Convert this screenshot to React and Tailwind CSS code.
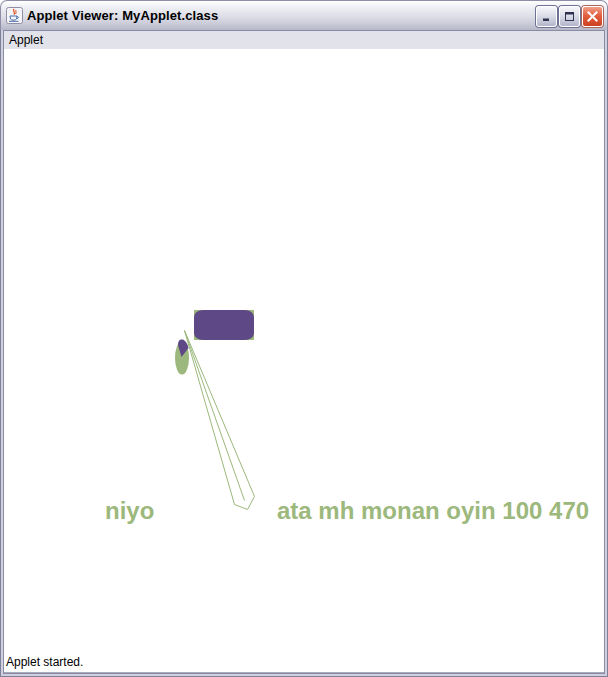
import React from "react";

function JavaIcon() {
  return (
    <svg width="17" height="17" viewBox="0 0 17 17">
      <rect x="0.5" y="0.5" width="16" height="16" rx="2" fill="#f4f4f8" stroke="#8e8ea6" />
      <path d="M8 2 C6 4 10 5 8 7.5" stroke="#e0501c" strokeWidth="1.3" fill="none" />
      <path d="M10 3 C9 4.5 11 5 9.6 7" stroke="#e0501c" strokeWidth="1" fill="none" />
      <path d="M4 9 L4.5 12 C5 13.5 10 13.5 10.5 12 L11 9 Z" fill="none" stroke="#4a6fa8" strokeWidth="1" />
      <path d="M11 9.5 C13 9.5 13 11.5 10.7 11.5" fill="none" stroke="#4a6fa8" strokeWidth="1" />
      <path d="M3 14.3 L12.5 14.3" stroke="#4a6fa8" strokeWidth="1" />
    </svg>
  );
}

function TitleButton({ kind }) {
  if (kind === "close") {
    return (
      <div className="w-[21px] h-[21px] rounded-[3px] border border-white bg-[linear-gradient(to_bottom,#f0a08a,#e2603f_45%,#cc4122)] shadow-[0_0_0_1px_#a8685e] flex items-center justify-center">
        <svg width="11" height="11" viewBox="0 0 11 11">
          <path d="M1.5 1.5 L9.5 9.5 M9.5 1.5 L1.5 9.5" stroke="white" strokeWidth="2" strokeLinecap="square" />
        </svg>
      </div>
    );
  }
  return (
    <div className="w-[21px] h-[21px] rounded-[3px] border border-white bg-[linear-gradient(to_bottom,#f6f6fa,#d9dae6_50%,#b4b5cb)] shadow-[0_0_0_1px_#6f7192] flex items-center justify-center">
      {kind === "min" ? (
        <svg width="11" height="11" viewBox="0 0 11 11">
          <rect x="2" y="7.5" width="6" height="2.5" fill="#2f3150" />
        </svg>
      ) : (
        <svg width="11" height="11" viewBox="0 0 11 11">
          <rect x="1.5" y="1.5" width="8" height="8" fill="none" stroke="#2f3150" strokeWidth="1" />
          <rect x="1.5" y="1.5" width="8" height="2" fill="#2f3150" />
        </svg>
      )}
    </div>
  );
}

export default function App() {
  const green = "#9cb87c";
  const purple = "#5e4886";
  return (
    <div className="w-[608px] h-[677px] flex flex-col overflow-hidden bg-white" style={{ fontFamily: '"Liberation Sans", Arial, sans-serif' }}>
      {/* Title bar */}
      <div className="h-[30px] shrink-0 rounded-t-[7px] border border-b-0 border-[#8e8fa6] bg-[linear-gradient(to_bottom,#ffffff_0%,#f0f1f5_20%,#dcdde6_55%,#c5c6d4_85%,#b6b7c8_100%)] flex items-center pl-[5px] pr-[4px]">
        <JavaIcon />
        <div className="ml-[4px] text-[13px] font-bold text-black leading-none tracking-[0.1px]" style={{ fontFamily: '"Liberation Sans", Arial, sans-serif' }}>
          Applet Viewer: MyApplet.class
        </div>
        <div className="ml-auto flex items-center gap-[2px] mt-[1px]">
          <TitleButton kind="min" />
          <TitleButton kind="max" />
          <TitleButton kind="close" />
        </div>
      </div>
      {/* Frame */}
      <div className="flex-1 flex flex-col bg-[#7f8099] px-px pb-px">
        <div className="flex-1 flex flex-col bg-[#cfd0de] px-[2px] pb-[2px]">
          <div className="flex-1 flex flex-col bg-[#8a8ba5] p-px">
            {/* Menu bar */}
            <div className="h-[18px] shrink-0 bg-[#e2e3ea] flex items-center pl-[5px]">
              <span className="text-[12px] leading-none text-black">Applet</span>
            </div>
            {/* Content */}
            <div className="flex-1 flex flex-col bg-white">
              <svg width="600" height="603" viewBox="4 49 600 603" className="block shrink-0">
                <rect x="194" y="310" width="60" height="30" fill={green} />
                <rect x="194" y="310" width="60" height="30" rx="9" ry="7" fill={purple} />
                <ellipse cx="182" cy="358" rx="7" ry="16.5" fill={green} />
                <path d="M181.5 357 L178 345 C178 340.5 180 339 182.5 339.5 C185 340 187.5 343.5 188.5 348 Z" fill={purple} />
                <polygon points="184.5,330.5 234.5,504.5 247.5,509.5 254.5,496.5" fill="none" stroke={green} strokeWidth="1" />
                <line x1="185" y1="332" x2="244.5" y2="500.5" stroke={green} strokeWidth="1" />
                <text x="105" y="519" fill={green} fontSize="24" fontWeight="bold" fontFamily='"Liberation Sans", Arial, sans-serif'>niyo</text>
                <text x="277" y="519" fill={green} fontSize="24" fontWeight="bold" fontFamily='"Liberation Sans", Arial, sans-serif'>ata mh monan oyin 100 470</text>
              </svg>
              <div className="flex-1 flex items-center pl-[2px] border-b border-[#a9aab8]">
                <span className="text-[12px] leading-none text-black">Applet started.</span>
              </div>
            </div>
          </div>
        </div>
      </div>
    </div>
  );
}
